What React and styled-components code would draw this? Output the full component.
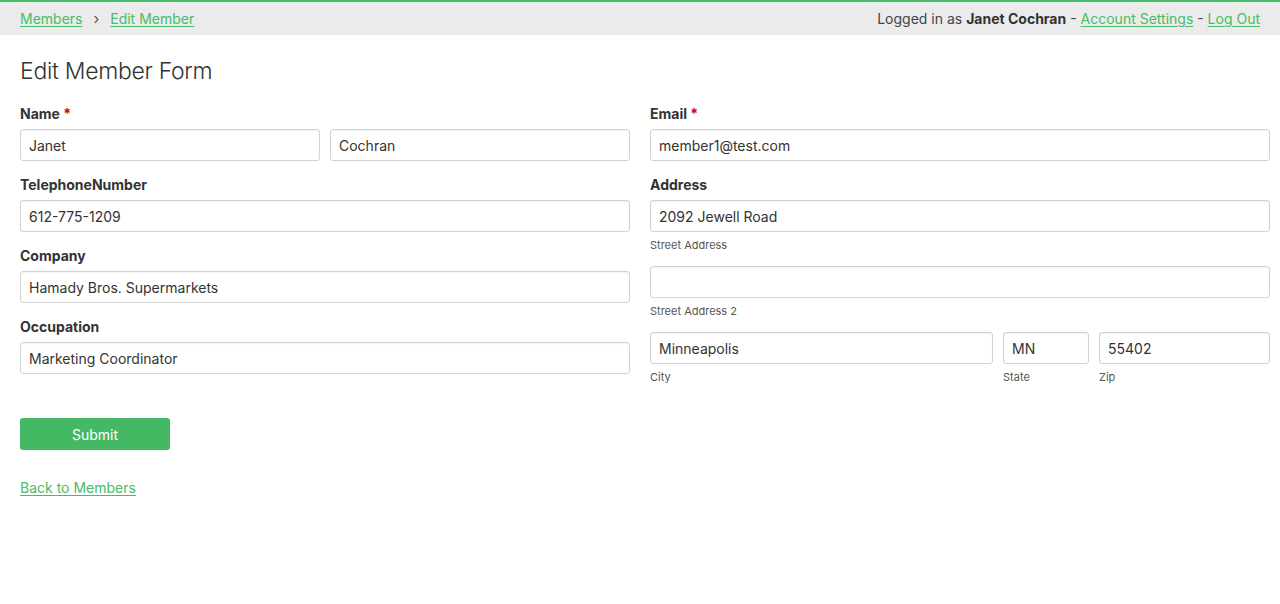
import React from "react";
import styled, { createGlobalStyle } from "styled-components";

const GlobalStyle = createGlobalStyle`
  html, body {
    margin: 0;
    padding: 0;
    background: #fff;
  }
  body {
    font-family: Inter, "Open Sans", "Liberation Sans", sans-serif;
    font-size: 14px;
    color: #333;
  }
  * {
    box-sizing: border-box;
  }
`;

const green = "#46bd66";

const Header = styled.header`
  display: flex;
  justify-content: space-between;
  align-items: center;
  height: 35px;
  padding: 0 20px;
  border-top: 2px solid ${green};
  background-color: #ebebeb;
  font-size: 14px;
  color: #444;
`;

const Crumbs = styled.nav`
  display: flex;
  align-items: center;
  gap: 11px;
  .sep {
    color: #555;
    font-size: 15px;
  }
`;

const Link = styled.a`
  color: ${green};
  text-decoration: underline;
  text-underline-offset: 2px;
  cursor: pointer;
`;

const UserInfo = styled.div`
  b {
    font-weight: 700;
    color: #333;
  }
`;

const Main = styled.main`
  padding: 20px 10px 0 20px;
`;

const Title = styled.h1`
  margin: 2px 0 19px;
  font-size: 23px;
  font-weight: 300;
  letter-spacing: -0.3px;
  color: #333;
  line-height: 28px;
`;

const Columns = styled.div`
  display: grid;
  grid-template-columns: 610px 620px;
  gap: 20px;
`;

const Group = styled.div`
  margin-bottom: 14px;
`;

const Label = styled.div`
  font-weight: 700;
  font-size: 14px;
  line-height: 20px;
  margin-bottom: 5px;
  color: #333;
  .req {
    color: #d0021b;
  }
`;

const Row = styled.div`
  display: grid;
  grid-template-columns: ${(p) => p.$cols || "1fr 1fr"};
  gap: 10px;
`;

const Input = styled.input`
  display: block;
  width: 100%;
  height: 32px;
  padding: 0 8px;
  border: 1px solid #d3d3d3;
  border-radius: 3px;
  box-shadow: inset 0 1px 2px rgba(0, 0, 0, 0.06);
  font-family: inherit;
  font-size: 14px;
  color: #333;
  background: #fff;
  outline: none;
`;

const Help = styled.div`
  font-size: 11px;
  line-height: 16px;
  color: #555;
  margin-top: 5px;
  margin-bottom: ${(p) => (p.$last ? "0" : "13px")};
`;

const Submit = styled.button`
  margin-top: 30px;
  width: 150px;
  height: 32px;
  border: none;
  border-radius: 3px;
  background-color: #45b864;
  color: #fff;
  font-family: inherit;
  font-size: 14px;
  cursor: pointer;
`;

const Back = styled.div`
  margin-top: 28px;
  line-height: 20px;
`;

export default function App() {
  return (
    <>
      <GlobalStyle />
      <Header>
        <Crumbs>
          <Link>Members</Link>
          <span className="sep">›</span>
          <Link>Edit Member</Link>
        </Crumbs>
        <UserInfo>
          Logged in as <b>Janet Cochran</b> - <Link>Account Settings</Link> -{" "}
          <Link>Log Out</Link>
        </UserInfo>
      </Header>
      <Main>
        <Title>Edit Member Form</Title>
        <Columns>
          <div>
            <Group>
              <Label>
                Name <span className="req">*</span>
              </Label>
              <Row>
                <Input defaultValue="Janet" />
                <Input defaultValue="Cochran" />
              </Row>
            </Group>
            <Group>
              <Label>TelephoneNumber</Label>
              <Input defaultValue="612-775-1209" />
            </Group>
            <Group>
              <Label>Company</Label>
              <Input defaultValue="Hamady Bros. Supermarkets" />
            </Group>
            <Group>
              <Label>Occupation</Label>
              <Input defaultValue="Marketing Coordinator" />
            </Group>
            <Submit type="button">Submit</Submit>
            <Back>
              <Link>Back to Members</Link>
            </Back>
          </div>
          <div>
            <Group>
              <Label>
                Email <span className="req">*</span>
              </Label>
              <Input defaultValue="member1@test.com" />
            </Group>
            <Group>
              <Label>Address</Label>
              <Input defaultValue="2092 Jewell Road" />
              <Help>Street Address</Help>
              <Input defaultValue="" />
              <Help>Street Address 2</Help>
              <Row $cols="343px 86px 1fr">
                <div>
                  <Input defaultValue="Minneapolis" />
                  <Help $last>City</Help>
                </div>
                <div>
                  <Input defaultValue="MN" />
                  <Help $last>State</Help>
                </div>
                <div>
                  <Input defaultValue="55402" />
                  <Help $last>Zip</Help>
                </div>
              </Row>
            </Group>
          </div>
        </Columns>
      </Main>
    </>
  );
}
